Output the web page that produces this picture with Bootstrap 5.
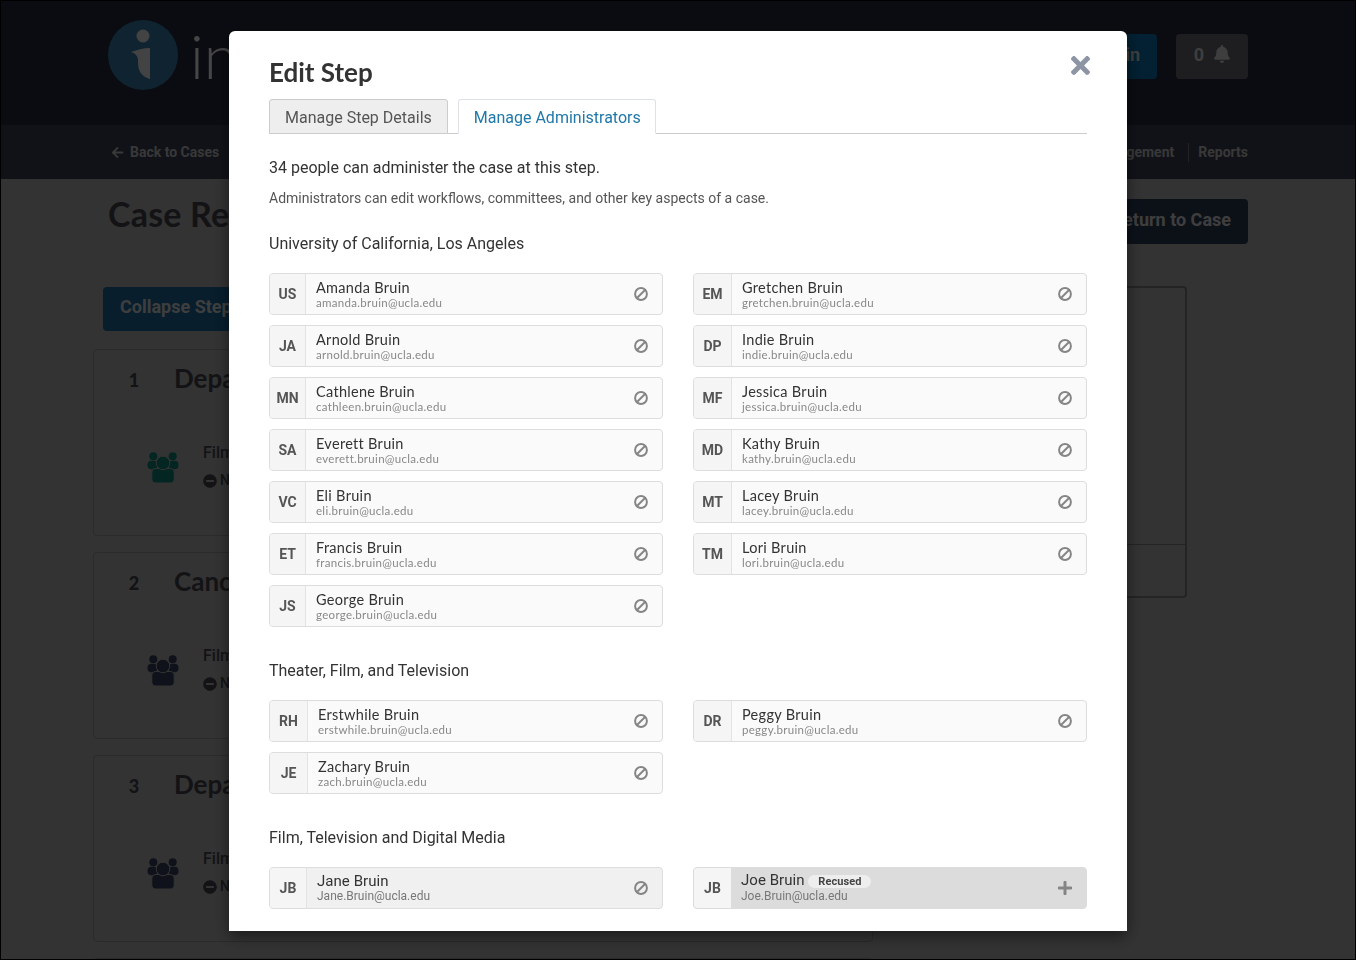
<!DOCTYPE html>
<html lang="en">
<head>
<meta charset="utf-8">
<title>Edit Step</title>
<link href="https://cdn.jsdelivr.net/npm/bootstrap@5.3.0/dist/css/bootstrap.min.css" rel="stylesheet">
<style>
html,body{height:100%;overflow:hidden}
body{font-family:Roboto,"Liberation Sans",sans-serif;background:#aaa;color:#424249}
.shell{height:960px;overflow:hidden;position:relative}
.frame{position:fixed;inset:0;border:1px solid #000;z-index:1060;pointer-events:none}
.top-bar{height:125px;background:#252b3c;padding:0 108px 15px}
.logo-disc{width:70px;height:70px;border-radius:50%;background:#327ba0;color:#e0e0e0}
.logo-word{font:300 62px/1 Lato,sans-serif;color:#e9e9e9;margin-left:12px}
.bar-btn{height:45px;border-radius:4px;font-weight:700;font-size:18px;padding:0 17px 4px;color:#d0d0d0;border:0;position:relative;top:1px}
.bar-btn-blue{background:#0a6ea8;margin-right:19px;width:100px;text-align:right}
.bar-btn-grey{background:#64676e;width:72px;gap:10px}
.sub-bar{height:54px;background:#393f50;padding:0 108px 0 111px;font-size:14px;font-weight:700;color:#bbb}
.back-link{gap:6px}
.sub-sep{width:1px;height:19px;background:#6d7280;margin:0 9px 0 14px}
.page-head{padding:20px 108px 0;height:107px}
.page-title{font:700 34px/30px Lato,sans-serif;letter-spacing:.2px;color:#424249;margin:0}
.return-btn{height:45px;width:200px;text-align:right;background:#2b3953;color:#d0d0d0;font-weight:700;font-size:18px;border-radius:4px;padding:0 17px 4px;border:0}
.work{padding-left:93px;gap:14px}
.steps{width:780px;margin-top:63px}
.collapse-btn{position:absolute;left:103px;top:287px;height:44px;width:180px;text-align:left;padding:0 17px 6px;background:#1b6496;color:#d0d0d0;font-weight:700;font-size:18px;border-radius:4px;border:0}
.step-box{height:187px;border:1px solid #8f8f8f;border-radius:4px;margin-bottom:16px;padding:0 30px 0 29px}
.step-head{height:60px;gap:29px;padding-bottom:4px;font:700 26px/1 Lato,sans-serif;color:#424249}
.step-no{width:22px;margin-top:4px;text-align:center;font-size:18px;font-weight:900}
.step-inner{margin:20px 0 0;height:76px;gap:24px;padding-left:24px;font-size:16px;font-weight:500;align-items:flex-start}
.step-inner>svg{margin-top:22px}
.step-txt{padding-top:11px}
.step-sub{font-size:14px;gap:3px;margin-top:5px}
.ico-green{color:#0a8072}
.ico-navy{color:#343c58}
.side-panel{width:300px;height:312px;border:2px solid #787878;border-radius:4px}
.side-rule{height:1px;background:#787878;margin-top:256px}
.modal-backdrop.show{opacity:.7}
.modal.d-block{overflow:hidden}
.edit-dlg{max-width:none;width:898px;margin:31px 0 0 229px}
.edit-dlg .modal-content{height:900px;border:0;border-radius:6px 6px 0 0;padding:27px 40px 0;color:#333;box-shadow:0 5px 15px rgba(0,0,0,.5);overflow:hidden}
.dlg-title{font:700 26px/1.1 Lato,sans-serif;color:#333;margin:0 0 12px}
.dlg-close{position:absolute;right:37px;top:25px;width:19px;height:19px;padding:0;border:0;background:none;color:#8d95a5}
.dlg-close svg{width:19px;height:19px;display:block}
.tabs-line{border-bottom:1px solid #ccc;gap:10px;--bs-nav-tabs-border-color:#ccc;--bs-nav-tabs-border-radius:3px}
.tabs-line .nav-link{height:35px;padding:0 15px;line-height:35px;font-size:16px;background:#eee;color:#555;border:1px solid #ccc;margin-bottom:-1px}
.tabs-line .nav-link.active{background:#fff;color:#1f78a8;border-bottom-color:#fff;padding-right:14.5px}
.lead-line{font-size:16px;line-height:20px;margin:24px 0 0;color:#333}
.note-line{font-size:14px;line-height:20px;margin:10px 0 0;color:#555}
.org-name{font-size:16px;line-height:20px;color:#333;font-weight:400;margin:0}
.org-first{margin-top:26px}
.org-next{margin-top:34px}
.ppl-row{--bs-gutter-x:30px;margin-top:19px}
.ppl-col{gap:10px}
.chip{height:42px;border:1px solid #ddd;border-radius:4px;background:#fafafa;overflow:hidden}
.chip-tag{flex:none;height:100%;padding-top:1px;background:#f5f5f5;border-right:1px solid #e3e3e3;font-size:14px;font-weight:700;color:#555}
.w36 .chip-tag{width:36px}
.w37 .chip-tag{width:37px}
.w38 .chip-tag{width:38px}
.chip-body{padding:1px 0 0 10px;min-width:0}
.chip-name{font:400 14.5px/15px Lato,sans-serif;letter-spacing:.3px;color:#333}
.chip-mail{font:400 11.5px/13px Lato,sans-serif;letter-spacing:.3px;color:#888;margin-top:1px}
.chip-alt{background:#f0f0f0}
.chip-alt .chip-name{font:400 15px/15px Roboto,sans-serif;letter-spacing:.05px}
.chip-alt .chip-mail{font:400 12px/13px Roboto,sans-serif;letter-spacing:0;color:#777}
.chip-off{background:#dcdcdc;border-color:#dcdcdc}
.chip-off .chip-tag{border-right:0}
.chip-act{flex:none;width:14px;height:14px;margin-right:14px;color:#858585;display:block}
.chip-badge{background:#eee;border-radius:8px;font-size:11px;font-weight:700;color:#444;padding:0 10px;line-height:14px}
</style>
</head>
<body>
<svg width="0" height="0" class="d-block position-absolute">
  <symbol id="i-ban" viewBox="0 0 14 14"><circle cx="7" cy="7" r="5.900" fill="none" stroke="currentColor" stroke-width="2"/><path d="M3 11 11 3" stroke="currentColor" stroke-width="2"/></symbol>
  <symbol id="i-x" viewBox="0 80 352 352"><path fill="currentColor" d="M242.720 256l100.070-100.070c12.280-12.280 12.280-32.190 0-44.480l-22.240-22.240c-12.280-12.280-32.190-12.280-44.480 0L176 189.280 75.930 89.210c-12.280-12.280-32.190-12.280-44.480 0L9.210 111.450c-12.280 12.280-12.280 32.190 0 44.480L109.280 256 9.210 356.070c-12.280 12.280-12.280 32.190 0 44.480l22.240 22.240c12.280 12.280 32.200 12.280 44.480 0L176 322.720l100.070 100.070c12.280 12.280 32.200 12.280 44.480 0l22.240-22.240c12.280-12.280 12.280-32.190 0-44.480L242.720 256z"/></symbol>
  <symbol id="i-plus" viewBox="0 32 448 448"><path fill="currentColor" d="M416 208H272V64c0-17.670-14.330-32-32-32h-32c-17.670 0-32 14.330-32 32v144H32c-17.670 0-32 14.330-32 32v32c0 17.670 14.330 32 32 32h144v144c0 17.670 14.330 32 32 32h32c17.670 0 32-14.330 32-32V304h144c17.670 0 32-14.330 32-32v-32c0-17.670-14.330-32-32-32z"/></symbol>
  <symbol id="i-bell" viewBox="0 0 448 512"><path fill="currentColor" d="M224 512c35.320 0 63.970-28.650 63.970-64H160.030c0 35.350 28.650 64 63.970 64zm215.390-149.710c-19.320-20.760-55.470-51.990-55.470-154.290 0-77.700-54.480-139.900-127.940-155.160V32c0-17.670-14.320-32-31.980-32s-31.980 14.330-31.980 32v20.840C118.560 68.100 64.080 130.300 64.080 208c0 102.300-36.150 133.530-55.470 154.290-6 6.450-8.660 14.160-8.610 21.710.11 16.400 12.980 32 32.100 32h383.800c19.120 0 32-15.600 32.100-32 .05-7.550-2.610-15.270-8.610-21.710z"/></symbol>
  <symbol id="i-back" viewBox="0 0 448 512"><path fill="currentColor" d="M257.500 445.100l-22.200 22.200c-9.400 9.400-24.600 9.400-33.900 0L7 273c-9.400-9.400-9.400-24.600 0-33.900L201.400 44.700c9.400-9.400 24.600-9.400 33.900 0l22.200 22.200c9.500 9.500 9.300 25-.4 34.300L136.600 216H424c13.300 0 24 10.700 24 24v32c0 13.300-10.700 24-24 24H136.600l120.500 114.800c9.800 9.300 10 24.800.4 34.300z"/></symbol>
  <symbol id="i-minus" viewBox="0 0 512 512"><path fill="currentColor" d="M256 8C119 8 8 119 8 256s111 248 248 248 248-111 248-248S393 8 256 8zM124 296c-6.600 0-12-5.400-12-12v-56c0-6.600 5.400-12 12-12h264c6.600 0 12 5.400 12 12v56c0 6.600-5.400 12-12 12H124z"/></symbol>
  <symbol id="i-group" viewBox="0 0 32 32"><circle cx="6.300" cy="4.300" r="4" fill="currentColor"/><circle cx="25.700" cy="4.300" r="4" fill="currentColor"/><rect x=".5" y="8.800" width="10" height="8.500" rx="4" fill="currentColor"/><rect x="21.500" y="8.800" width="10" height="8.500" rx="4" fill="currentColor"/><rect x="4.800" y="16.500" width="22.400" height="14.500" rx="3.500" fill="currentColor" stroke="#aaa"/><circle cx="16" cy="11" r="6.800" fill="currentColor" stroke="#aaa"/></symbol>
</svg>

<div class="shell">
<header class="top-bar d-flex align-items-center justify-content-between">
  <div class="d-flex align-items-center">
    <div class="logo-disc d-flex align-items-center justify-content-center">
      <svg width="26" height="56" viewBox="0 0 26 56" aria-hidden="true"><circle cx="13" cy="9" r="6.500" fill="currentColor"/><path fill="currentColor" d="M1 25C7 23 14 21 20 21V52C12 50 8 44 8 36V33C8 29 5 26 1 25z"/></svg>
    </div>
    <span class="logo-word">in</span>
  </div>
  <div class="d-flex align-items-center">
    <button class="bar-btn bar-btn-blue">in</button>
    <button class="bar-btn bar-btn-grey d-flex align-items-center justify-content-center">0 <svg width="16" height="18"><use href="#i-bell"/></svg></button>
  </div>
</header>
<nav class="sub-bar d-flex align-items-center justify-content-between">
  <span class="back-link d-flex align-items-center"><svg width="13" height="13"><use href="#i-back"/></svg>Back to Cases</span>
  <span class="d-flex align-items-center">gement<i class="sub-sep"></i>Reports</span>
</nav>
<div class="page-head d-flex justify-content-between align-items-start">
  <h1 class="page-title">Case Re</h1>
  <button class="return-btn">eturn to Case</button>
</div>
<button class="collapse-btn">Collapse Step</button>
<div class="work d-flex">
  <div class="steps">
    <section class="step-box">
      <div class="step-head d-flex align-items-center"><span class="step-no">1</span>Depa</div>
      <div class="step-inner d-flex">
        <svg width="32" height="32" class="ico-green"><use href="#i-group"/></svg>
        <div class="step-txt"><div>Film</div><div class="step-sub d-flex align-items-center"><svg width="14" height="14"><use href="#i-minus"/></svg> N</div></div>
      </div>
    </section>
    <section class="step-box">
      <div class="step-head d-flex align-items-center"><span class="step-no">2</span>Canc</div>
      <div class="step-inner d-flex">
        <svg width="32" height="32" class="ico-navy"><use href="#i-group"/></svg>
        <div class="step-txt"><div>Film</div><div class="step-sub d-flex align-items-center"><svg width="14" height="14"><use href="#i-minus"/></svg> N</div></div>
      </div>
    </section>
    <section class="step-box">
      <div class="step-head d-flex align-items-center"><span class="step-no">3</span>Depa</div>
      <div class="step-inner d-flex">
        <svg width="32" height="32" class="ico-navy"><use href="#i-group"/></svg>
        <div class="step-txt"><div>Film</div><div class="step-sub d-flex align-items-center"><svg width="14" height="14"><use href="#i-minus"/></svg> N</div></div>
      </div>
    </section>
    <section class="step-box"></section>
  </div>
  <aside class="side-panel"><div class="side-rule"></div></aside>
</div>
</div>

<div class="modal-backdrop show"></div>
<div class="modal d-block" tabindex="-1">
  <div class="modal-dialog edit-dlg">
    <div class="modal-content">
      <h2 class="dlg-title">Edit Step</h2>
      <button class="dlg-close" aria-label="Close"><svg><use href="#i-x"/></svg></button>
      <ul class="nav nav-tabs tabs-line">
        <li class="nav-item"><a class="nav-link" href="#">Manage Step Details</a></li>
        <li class="nav-item"><a class="nav-link active" href="#">Manage Administrators</a></li>
      </ul>
      <p class="lead-line">34 people can administer the case at this step.</p>
      <p class="note-line">Administrators can edit workflows, committees, and other key aspects of a case.</p>

      <h3 class="org-name org-first">University of California, Los Angeles</h3>
      <div class="row ppl-row">
        <div class="col-6 d-flex flex-column ppl-col w36">
          <div class="chip d-flex align-items-center"><div class="chip-tag d-flex align-items-center justify-content-center">US</div><div class="chip-body flex-grow-1"><div class="chip-name">Amanda Bruin</div><div class="chip-mail">amanda.bruin@ucla.edu</div></div><svg class="chip-act"><use href="#i-ban"/></svg></div>
          <div class="chip d-flex align-items-center"><div class="chip-tag d-flex align-items-center justify-content-center">JA</div><div class="chip-body flex-grow-1"><div class="chip-name">Arnold Bruin</div><div class="chip-mail">arnold.bruin@ucla.edu</div></div><svg class="chip-act"><use href="#i-ban"/></svg></div>
          <div class="chip d-flex align-items-center"><div class="chip-tag d-flex align-items-center justify-content-center">MN</div><div class="chip-body flex-grow-1"><div class="chip-name">Cathlene Bruin</div><div class="chip-mail">cathleen.bruin@ucla.edu</div></div><svg class="chip-act"><use href="#i-ban"/></svg></div>
          <div class="chip d-flex align-items-center"><div class="chip-tag d-flex align-items-center justify-content-center">SA</div><div class="chip-body flex-grow-1"><div class="chip-name">Everett Bruin</div><div class="chip-mail">everett.bruin@ucla.edu</div></div><svg class="chip-act"><use href="#i-ban"/></svg></div>
          <div class="chip d-flex align-items-center"><div class="chip-tag d-flex align-items-center justify-content-center">VC</div><div class="chip-body flex-grow-1"><div class="chip-name">Eli Bruin</div><div class="chip-mail">eli.bruin@ucla.edu</div></div><svg class="chip-act"><use href="#i-ban"/></svg></div>
          <div class="chip d-flex align-items-center"><div class="chip-tag d-flex align-items-center justify-content-center">ET</div><div class="chip-body flex-grow-1"><div class="chip-name">Francis Bruin</div><div class="chip-mail">francis.bruin@ucla.edu</div></div><svg class="chip-act"><use href="#i-ban"/></svg></div>
          <div class="chip d-flex align-items-center"><div class="chip-tag d-flex align-items-center justify-content-center">JS</div><div class="chip-body flex-grow-1"><div class="chip-name">George Bruin</div><div class="chip-mail">george.bruin@ucla.edu</div></div><svg class="chip-act"><use href="#i-ban"/></svg></div>
        </div>
        <div class="col-6 d-flex flex-column ppl-col w38">
          <div class="chip d-flex align-items-center"><div class="chip-tag d-flex align-items-center justify-content-center">EM</div><div class="chip-body flex-grow-1"><div class="chip-name">Gretchen Bruin</div><div class="chip-mail">gretchen.bruin@ucla.edu</div></div><svg class="chip-act"><use href="#i-ban"/></svg></div>
          <div class="chip d-flex align-items-center"><div class="chip-tag d-flex align-items-center justify-content-center">DP</div><div class="chip-body flex-grow-1"><div class="chip-name">Indie Bruin</div><div class="chip-mail">indie.bruin@ucla.edu</div></div><svg class="chip-act"><use href="#i-ban"/></svg></div>
          <div class="chip d-flex align-items-center"><div class="chip-tag d-flex align-items-center justify-content-center">MF</div><div class="chip-body flex-grow-1"><div class="chip-name">Jessica Bruin</div><div class="chip-mail">jessica.bruin@ucla.edu</div></div><svg class="chip-act"><use href="#i-ban"/></svg></div>
          <div class="chip d-flex align-items-center"><div class="chip-tag d-flex align-items-center justify-content-center">MD</div><div class="chip-body flex-grow-1"><div class="chip-name">Kathy Bruin</div><div class="chip-mail">kathy.bruin@ucla.edu</div></div><svg class="chip-act"><use href="#i-ban"/></svg></div>
          <div class="chip d-flex align-items-center"><div class="chip-tag d-flex align-items-center justify-content-center">MT</div><div class="chip-body flex-grow-1"><div class="chip-name">Lacey Bruin</div><div class="chip-mail">lacey.bruin@ucla.edu</div></div><svg class="chip-act"><use href="#i-ban"/></svg></div>
          <div class="chip d-flex align-items-center"><div class="chip-tag d-flex align-items-center justify-content-center">TM</div><div class="chip-body flex-grow-1"><div class="chip-name">Lori Bruin</div><div class="chip-mail">lori.bruin@ucla.edu</div></div><svg class="chip-act"><use href="#i-ban"/></svg></div>
        </div>
      </div>

      <h3 class="org-name org-next">Theater, Film, and Television</h3>
      <div class="row ppl-row">
        <div class="col-6 d-flex flex-column ppl-col w38">
          <div class="chip d-flex align-items-center"><div class="chip-tag d-flex align-items-center justify-content-center">RH</div><div class="chip-body flex-grow-1"><div class="chip-name">Erstwhile Bruin</div><div class="chip-mail">erstwhile.bruin@ucla.edu</div></div><svg class="chip-act"><use href="#i-ban"/></svg></div>
          <div class="chip d-flex align-items-center"><div class="chip-tag d-flex align-items-center justify-content-center">JE</div><div class="chip-body flex-grow-1"><div class="chip-name">Zachary Bruin</div><div class="chip-mail">zach.bruin@ucla.edu</div></div><svg class="chip-act"><use href="#i-ban"/></svg></div>
        </div>
        <div class="col-6 d-flex flex-column ppl-col w38">
          <div class="chip d-flex align-items-center"><div class="chip-tag d-flex align-items-center justify-content-center">DR</div><div class="chip-body flex-grow-1"><div class="chip-name">Peggy Bruin</div><div class="chip-mail">peggy.bruin@ucla.edu</div></div><svg class="chip-act"><use href="#i-ban"/></svg></div>
        </div>
      </div>

      <h3 class="org-name org-next">Film, Television and Digital Media</h3>
      <div class="row ppl-row">
        <div class="col-6 d-flex flex-column ppl-col w37">
          <div class="chip chip-alt d-flex align-items-center"><div class="chip-tag d-flex align-items-center justify-content-center">JB</div><div class="chip-body flex-grow-1"><div class="chip-name">Jane Bruin</div><div class="chip-mail">Jane.Bruin@ucla.edu</div></div><svg class="chip-act"><use href="#i-ban"/></svg></div>
        </div>
        <div class="col-6 d-flex flex-column ppl-col w37">
          <div class="chip chip-alt chip-off d-flex align-items-center"><div class="chip-tag d-flex align-items-center justify-content-center">JB</div><div class="chip-body flex-grow-1"><div class="chip-name">Joe Bruin <span class="chip-badge">Recused</span></div><div class="chip-mail">Joe.Bruin@ucla.edu</div></div><svg class="chip-act"><use href="#i-plus"/></svg></div>
        </div>
      </div>
    </div>
  </div>
</div>
<div class="frame"></div>
<script src="https://cdn.jsdelivr.net/npm/bootstrap@5.3.0/dist/js/bootstrap.bundle.min.js"></script>
</body>
</html>
